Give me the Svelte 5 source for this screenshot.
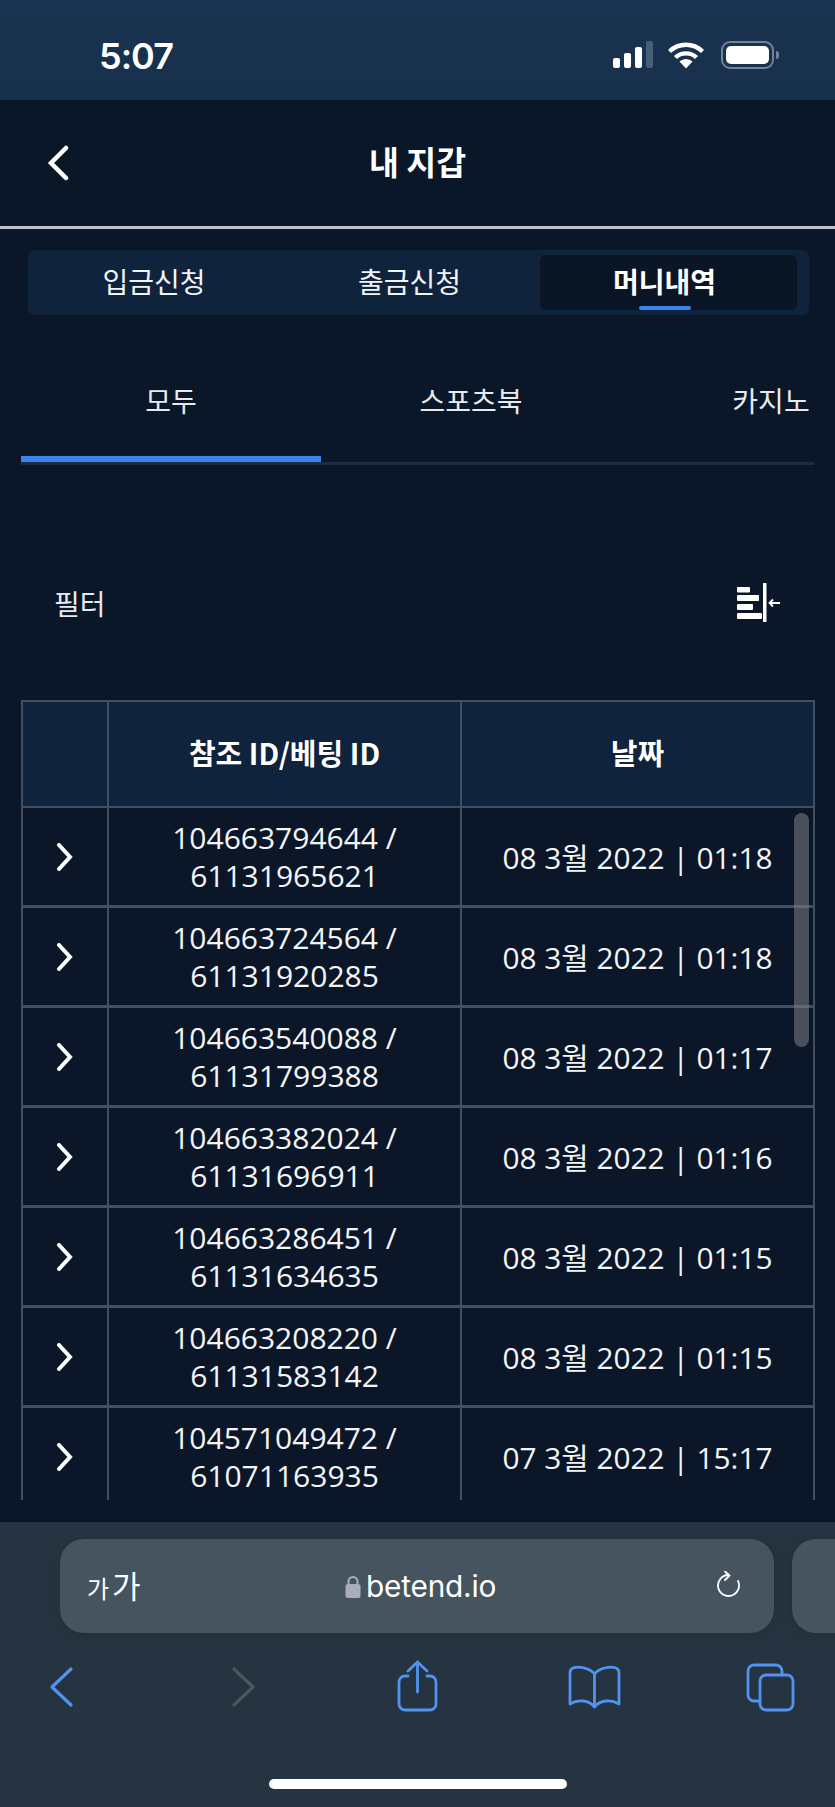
<script>
  const rows = [
    ['104663794644', '61131965621', '08 3월 2022', '01:18'],
    ['104663724564', '61131920285', '08 3월 2022', '01:18'],
    ['104663540088', '61131799388', '08 3월 2022', '01:17'],
    ['104663382024', '61131696911', '08 3월 2022', '01:16'],
    ['104663286451', '61131634635', '08 3월 2022', '01:15'],
    ['104663208220', '61131583142', '08 3월 2022', '01:15'],
    ['104571049472', '61071163935', '07 3월 2022', '15:17']
  ];
</script>

<div class="page">
  <header class="status">
    <span class="time">5:07</span>
    <div class="status-icons">
      <div class="signal">
        <i class="b1"></i><i class="b2"></i><i class="b3"></i><i class="b4"></i>
      </div>
      <svg class="wifi" width="36" height="28" viewBox="0 0 36 28">
        <path d="M1.5 10.5 C10.5 1.5 25.5 1.5 34.5 10.5" fill="none" stroke="#fff" stroke-width="4.4"/>
        <path d="M7.5 16.5 C13 11 23 11 28.5 16.5" fill="none" stroke="#fff" stroke-width="4.4"/>
        <path d="M11.5 20.5 C15.5 17 20.5 17 24.5 20.5 L18 27.5 Z" fill="#fff"/>
      </svg>
      <div class="battery"><span></span></div>
    </div>
  </header>

  <nav class="title-bar">
    <svg class="back" width="24" height="36" viewBox="0 0 24 36">
      <path d="M20 3 L5 18 L20 33" fill="none" stroke="#fff" stroke-width="4.5" stroke-linecap="round" stroke-linejoin="miter"/>
    </svg>
    <h1>내 지갑</h1>
  </nav>

  <div class="segments">
    <span class="seg">입금신청</span>
    <span class="seg">출금신청</span>
    <span class="seg active">머니내역</span>
  </div>

  <div class="subtabs">
    <span class="sub on">모두</span>
    <span class="sub">스포츠북</span>
    <span class="sub">카지노</span>
  </div>

  <div class="filter">
    <span>필터</span>
    <svg width="44" height="40" viewBox="0 0 44 40">
      <rect x="0" y="4" width="13" height="5.5" rx="1" fill="#fff"/>
      <rect x="0" y="12" width="22" height="6" rx="1" fill="#fff"/>
      <rect x="0" y="21" width="16" height="6" rx="1" fill="#fff"/>
      <rect x="0" y="30" width="25" height="6" rx="1" fill="#fff"/>
      <rect x="26" y="0" width="3.5" height="39" fill="#fff"/>
      <path d="M32 20 H43 M36 16.5 L32.5 20 L36 23.5" fill="none" stroke="#fff" stroke-width="1.8"/>
    </svg>
  </div>

  <div class="table">
    <div class="row head">
      <div class="cell"></div>
      <div class="cell">참조 ID/베팅 ID</div>
      <div class="cell last">날짜</div>
    </div>
    {#each rows as r}
      <div class="row">
        <div class="cell">
          <svg width="18" height="28" viewBox="0 0 18 28">
            <path d="M3 2 L14 14 L3 26" fill="none" stroke="#fff" stroke-width="4" stroke-linecap="round"/>
          </svg>
        </div>
        <div class="cell ids"><span>{r[0]} /</span><span>{r[1]}</span></div>
        <div class="cell last date">{r[2]} | {r[3]}</div>
      </div>
    {/each}
    <div class="scroll"></div>
  </div>

  <footer class="safari">
    <div class="url-row">
      <div class="url">
        <span class="aa"><small>가</small>가</span>
        <span class="host">
          <svg width="16" height="23" viewBox="0 0 16 23">
            <rect x="0.5" y="9" width="15" height="14" rx="2.5" fill="#a9afb9"/>
            <path d="M3.5 10 V6.5 a4.5 4.5 0 0 1 9 0 V10" fill="none" stroke="#a9afb9" stroke-width="2"/>
          </svg>
          betend.io
        </span>
        <svg width="24" height="30" viewBox="0 0 24 30">
          <path d="M11 4 A10.5 10.5 0 1 0 21 10" fill="none" stroke="#fff" stroke-width="1.8" stroke-linecap="round"/>
          <path d="M8 0.5 L12.5 4.5 L8 9" fill="none" stroke="#fff" stroke-width="1.8" stroke-linecap="round" stroke-linejoin="round"/>
        </svg>
      </div>
      <div class="url next"></div>
    </div>
    <div class="tools">
      <svg width="60" height="60" viewBox="0 0 60 60"><path d="M40 12 L21 30 L40 48" class="ic thin"/></svg>
      <svg width="60" height="60" viewBox="0 0 60 60"><path d="M26 12 L45 30 L26 48" class="ic thin off"/></svg>
      <svg width="60" height="60" viewBox="0 0 60 60">
        <path d="M23 19 H20 a6 6 0 0 0 -6 6 V47 a6 6 0 0 0 6 6 H45 a6 6 0 0 0 6 -6 V25 a6 6 0 0 0 -6 -6 H42" class="ic"/>
        <path d="M32.5 5 V35 M23 14 L32.5 5 L42 14" class="ic"/>
      </svg>
      <svg width="60" height="60" viewBox="0 0 60 60">
        <path d="M32.5 17 V50 M32.5 17 C28 11 17 9 11 11 Q8 12 8 16 V47 C16 42 27 43 32.5 50 C38 43 49 42 57 47 V16 Q57 12 54 11 C48 9 37 11 32.5 17 Z" class="ic"/>
      </svg>
      <svg width="60" height="60" viewBox="0 0 60 60">
        <path d="M43 18 V14 a6 6 0 0 0 -6 -6 H15 a6 6 0 0 0 -6 6 V38 a6 6 0 0 0 6 6 H21" class="ic"/>
        <rect x="21" y="18" width="33" height="35" rx="6" class="ic"/>
      </svg>
    </div>
    <div class="home"></div>
  </footer>
</div>

<style>
  :global(body) { margin: 0; background: #0a1729; }
  .page {
    width: 835px;
    height: 1807px;
    overflow: hidden;
    background: #0a1729;
    color: #fff;
    font-family: "Open Sans", "Noto Sans CJK KR", sans-serif;
    display: flex;
    flex-direction: column;
  }
  .status {
    height: 100px;
    flex: none;
    box-sizing: border-box;
    background: linear-gradient(#1a3350, #17304c);
    display: flex;
    align-items: flex-start;
    justify-content: space-between;
    padding: 34px 61px 0 99px;
  }
  .time { font: 600 36px/44px Inter, sans-serif; letter-spacing: -1px; }
  .status-icons { display: flex; align-items: flex-start; padding-top: 7px; }
  .signal { display: flex; align-items: flex-end; gap: 4px; height: 27px; margin-right: 15px; }
  .signal i { display: block; width: 7px; border-radius: 2px; background: #fff; }
  .b1 { height: 10px; }
  .b2 { height: 15px; }
  .b3 { height: 21px; }
  .signal .b4 { height: 27px; background: #47607a; }
  .wifi { margin-right: 17px; }
  .battery {
    position: relative;
    width: 53px;
    height: 28px;
    box-sizing: border-box;
    border: 2px solid #6f8399;
    border-radius: 9px;
    padding: 3px;
  }
  .battery span { display: block; height: 100%; background: #fff; border-radius: 5px; }
  .battery::after {
    content: "";
    position: absolute;
    left: 53px;
    top: 8px;
    width: 3px;
    height: 8px;
    background: #6f8399;
    border-radius: 0 3px 3px 0;
  }
  .title-bar {
    height: 129px;
    flex: none;
    box-sizing: border-box;
    border-bottom: 3px solid #bfc2c6;
    display: flex;
    align-items: center;
    justify-content: center;
    position: relative;
    padding-bottom: 4px;
  }
  .back { position: absolute; left: 46px; top: 45px; }
  h1 { margin: 0; font: 700 32.5px/40px "Noto Sans CJK KR", sans-serif; }
  .segments {
    margin: 21px 26px 0 28px;
    height: 65px;
    flex: none;
    box-sizing: border-box;
    background: #10233d;
    border-radius: 7px;
    padding: 5px 12px 5px 0;
    display: grid;
    grid-template-columns: 252px 259px 258px;
  }
  .seg {
    display: flex;
    align-items: center;
    justify-content: center;
    font: 400 28px/36px "Noto Sans CJK KR", sans-serif;
    color: #f2f3f5;
    padding-bottom: 3px;
  }
  .seg:nth-child(3) { margin-left: 1px; }
  .seg.active {
    position: relative;
    background: #0a1626;
    border-radius: 6px;
    font-weight: 700;
    color: #fff;
    padding-right: 8px;
  }
  .seg.active::after {
    content: "";
    position: absolute;
    left: 99px;
    bottom: 0;
    width: 52px;
    height: 4px;
    border-radius: 2px;
    background: #3b82f0;
  }
  .subtabs {
    margin: 55px 21px 0;
    height: 95px;
    flex: none;
    box-sizing: border-box;
    border-bottom: 3px solid #1f2b3c;
    display: flex;
    overflow: hidden;
  }
  .sub {
    flex: 0 0 300px;
    box-sizing: border-box;
    height: 92px;
    text-align: center;
    font: 400 28px/60px "Noto Sans CJK KR", sans-serif;
    color: #e8eaed;
  }
  .sub.on { border-bottom: 6px solid #3b82f0; }
  .filter {
    margin: 115px 54px 0 54px;
    height: 46px;
    flex: none;
    display: flex;
    align-items: center;
    justify-content: space-between;
    font: 400 28px/46px "Noto Sans CJK KR", sans-serif;
    color: #e8eaed;
  }
  .table {
    position: relative;
    margin: 74px 0 0 21px;
    width: 794px;
    height: 800px;
    flex: none;
    overflow: hidden;
    box-sizing: border-box;
    border: 2px solid #414f62;
    border-bottom: 0;
  }
  .row {
    display: grid;
    grid-template-columns: 86px 353px 1fr;
    height: 100px;
    box-sizing: border-box;
    border-bottom: 3px solid #414f62;
    background: #0b1728;
  }
  .row:last-of-type { background: #081628; }
  .row.head {
    height: 106px;
    background: #10233d;
    border-bottom-width: 2px;
    font: 700 29px/36px "Noto Sans CJK KR", "Open Sans", sans-serif;
  }
  .row.head .cell { padding-bottom: 4px; }
  .cell {
    display: flex;
    align-items: center;
    justify-content: center;
    box-sizing: border-box;
    border-right: 2px solid #414f62;
    font-size: 30px;
    color: #f4f5f7;
  }
  .row.head .cell { font-size: 29px; color: #fff; }
  .cell.last { border-right: 0; padding-right: 0; }
  .cell.date { font-size: 29.8px; padding-bottom: 2px; }
  .ids { flex-direction: column; line-height: 38px; }
  .scroll {
    position: absolute;
    right: 4px;
    top: 111px;
    width: 15px;
    height: 234px;
    border-radius: 8px;
    background: rgba(125, 128, 133, 0.55);
  }
  .safari {
    margin-top: 22px;
    flex: 1;
    background: #263340;
    position: relative;
    box-sizing: border-box;
    padding-top: 17px;
  }
  .url-row { display: flex; gap: 18px; padding-left: 60px; }
  .url {
    flex: 0 0 714px;
    height: 94px;
    box-sizing: border-box;
    border-radius: 24px;
    background: #465460;
    display: flex;
    align-items: center;
    justify-content: space-between;
    padding: 0 33px 0 27px;
    position: relative;
    box-shadow: 0 2px 12px rgba(0, 0, 0, 0.1);
  }
  .url.next { flex: 0 0 100px; }
  .aa { font: 400 31px/40px "Noto Sans CJK KR", sans-serif; }
  .aa small { font-size: 24px; margin-right: 3px; }
  .host {
    position: absolute;
    left: 285px;
    display: flex;
    align-items: center;
    gap: 5px;
    font: 400 29.8px/40px Inter, sans-serif;
    letter-spacing: -0.2px;
  }
  .tools { display: flex; gap: 117px; padding: 24px 0 0 31px; width: 1000px; }
  .tools svg { flex: none; }
  .ic { fill: none; stroke: #5293f2; stroke-width: 2.8; stroke-linecap: round; stroke-linejoin: round; }
  .ic.thin { stroke-width: 3.2; }
  .ic.off { stroke: #4b5661; }
  .home {
    position: absolute;
    left: 269px;
    bottom: 18px;
    width: 298px;
    height: 10px;
    border-radius: 5px;
    background: #fff;
  }
</style>
